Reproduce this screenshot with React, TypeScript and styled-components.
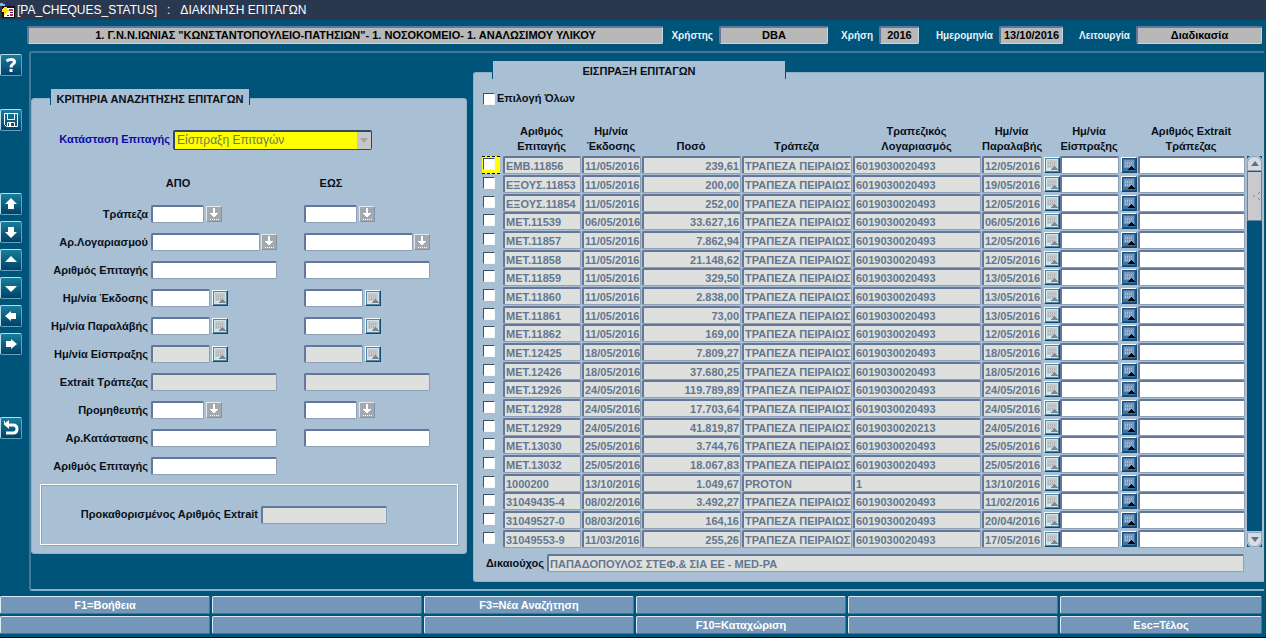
import React from "react";
import styled, { createGlobalStyle, css } from "styled-components";

const c = {
  navy: "#2a384f",
  teal: "#005379",
  panel: "#a8bfd4",
  panelEdge: "#8fb0cb",
  field: "#dee0de",
  fieldText: "#62778f",
  edge: "#62779a",
  grey: "#b8b8b8",
  button: "#7496b9",
};

const Global = createGlobalStyle`
  *, *::before, *::after { box-sizing: border-box; }
  body { margin: 0; background: #fff; font: bold 11px/15px "Liberation Sans", Arial, sans-serif; color: #0a0f18; }
  button, input, select { font: inherit; margin: 0; padding: 0; border-radius: 0; }
  svg { display: block; }
`;

const Page = styled.div`
  background: ${c.teal};
  border-bottom: 1px solid #000;
`;

const TitleBar = styled.header`
  display: flex;
  align-items: center;
  gap: 1px;
  height: 20px;
  background: ${c.navy};
  color: #fff;
  font-size: 12px;
  font-weight: normal;
  white-space: pre;
`;

const StatusBar = styled.div`
  display: grid;
  grid-template-columns: minmax(0, 1fr) 56px 109px 51px 40px 80px 64px 73px 126px;
  align-items: center;
  height: 30px;
  padding: 0 4px 0 27px;
`;

const StatusLabel = styled.span`
  padding-right: 6px;
  color: #e6f2f8;
  font-size: 10px;
  text-align: right;
`;

const StatusValue = styled.output`
  height: 18px;
  border: 2px solid #62779a;
  border-right: 1px solid #c4d6e4;
  border-bottom: 1px solid #c4d6e4;
  border-radius: 2px;
  background: ${c.grey};
  color: #000;
  line-height: 15px;
  text-align: center;
  white-space: nowrap;
  overflow: hidden;
`;

const Body = styled.div`
  display: flex;
  gap: 7px;
  padding: 1px 2px 0 0;
`;

const Tools = styled.nav`
  display: flex;
  flex: none;
  flex-direction: column;
  gap: 6px;
  width: 22px;
  padding-top: 3px;
`;

const ToolButton = styled.button<{ $before?: number }>`
  display: flex;
  align-items: center;
  justify-content: center;
  width: 22px;
  height: 22px;
  margin-top: ${(p) => p.$before ?? 0}px;
  border: 1px solid #b9dcea;
  border-right-color: #5fa3bf;
  border-bottom-color: #5fa3bf;
  border-radius: 2px;
  background: linear-gradient(#1a7d99, #00416a);
  color: #fff;
`;

const Frame = styled.main`
  display: flex;
  flex: 1;
  gap: 6px;
  align-items: flex-start;
  min-width: 0;
  padding-bottom: 7px;
  border: 2px solid #44779c;
  border-right: 0;
  border-bottom-color: #86b2cf;
  border-radius: 3px 0 0 3px;
`;

const PanelBox = styled.section<{ $grow?: boolean }>`
  display: flex;
  flex: ${(p) => (p.$grow ? "1 1 0" : "none")};
  flex-direction: column;
  align-items: flex-start;
  width: ${(p) => (p.$grow ? "auto" : "436px")};
  min-width: 0;
  padding-top: ${(p) => (p.$grow ? 8 : 36)}px;
`;

const PanelTab = styled.h2<{ $wide?: boolean }>`
  position: relative;
  width: ${(p) => (p.$wide ? 294 : 200)}px;
  height: ${(p) => (p.$wide ? 18 : 16)}px;
  margin: 0 0 -7px 19px;
  border: solid ${c.teal};
  border-width: 0 1px;
  background: ${c.panel};
  font-size: 11px;
  line-height: 20px;
  text-align: center;
`;

const PanelBody = styled.div`
  align-self: stretch;
  border: 1px solid ${c.panelEdge};
  border-radius: 3px;
  background: ${c.panel};
`;

const Criteria = styled(PanelBody)`
  padding: 30px 7px 8px 0;
`;

const StateRow = styled.div`
  display: flex;
  align-items: center;
  gap: 3px;
  height: 21px;
  padding-left: 24px;
`;

const StateLabel = styled.label`
  width: 114px;
  color: #0a0aa8;
  text-align: right;
  white-space: nowrap;
`;

const SelectWrap = styled.span`
  position: relative;
  width: 199px;
`;

const StateSelect = styled.select`
  display: block;
  appearance: none;
  width: 100%;
  height: 20px;
  padding: 0 16px 0 2px;
  border: 2px solid #34455f;
  border-right-width: 1px;
  border-bottom-width: 1px;
  border-radius: 2px;
  background: #ff0;
  color: #6c7a5c;
  font-size: 12px;
  font-weight: normal;
  line-height: 16px;
`;

const SelectArrow = styled.span`
  position: absolute;
  top: 2px;
  right: 1px;
  display: flex;
  align-items: center;
  justify-content: center;
  width: 14px;
  height: 17px;
  background: #c6c8c8;
  pointer-events: none;
`;

const RangeRow = styled.div<{ $head?: boolean }>`
  display: grid;
  grid-template-columns: 116px 150px 1fr;
  column-gap: 3px;
  align-items: center;
  height: 28px;
  margin: ${(p) => (p.$head ? "19px 0 3px" : "0")};
`;

const RangeLabel = styled.label`
  text-align: right;
  white-space: nowrap;
`;

const RangeHead = styled.span`
  width: 54px;
  text-align: center;
`;

const FieldGroup = styled.span<{ $gap: number }>`
  display: flex;
  align-items: center;
  gap: ${(p) => p.$gap}px;
`;

const fieldLook = css`
  border: 1px solid #8f9fb5;
  border-top: 2px solid ${c.edge};
  border-left: 2px solid ${c.edge};
  border-radius: 2px;
`;

const TextField = styled.input<{ $w: number }>`
  width: ${(p) => p.$w}px;
  height: 18px;
  ${fieldLook}
  background: #fff;
  &:disabled { background: ${c.field}; }
`;

const ListButton = styled.button`
  display: flex;
  align-items: center;
  justify-content: center;
  width: 16px;
  height: 16px;
  border: 1px solid #7f93ae;
  border-top-color: #e2e8ee;
  border-left-color: #e2e8ee;
  background: #a4a9b0;
`;

const DateButton = styled.button<{ $dark?: boolean }>`
  display: block;
  width: 16px;
  height: 16px;
  border: 1px solid #14496c;
  border-top-color: #f4fbfd;
  border-left-color: #f4fbfd;
  background: ${(p) => (p.$dark ? "#3f74a6" : "#cfe6ef")};
`;

const DefaultBox = styled.div`
  display: flex;
  align-items: center;
  gap: 3px;
  height: 61px;
  margin: 4px 1px 0 8px;
  padding-left: 34px;
  border: 1px solid #fff;
  box-shadow: inset 1px 1px 0 #90a5b9, 1px 1px 0 #90a5b9;
  label { width: 183px; text-align: right; white-space: nowrap; }
`;

const Results = styled(PanelBody)`
  padding: 18px 2px 9px 8px;
  border-right: 0;
  border-radius: 3px 0 0 3px;
`;

const Check = styled.input`
  appearance: none;
  display: block;
  flex: none;
  width: 12px;
  height: 12px;
  border: 1px solid #f3f7fa;
  border-top-color: #3d4f68;
  border-left-color: #3d4f68;
  background: #fff;
`;

const SelectAll = styled.label`
  display: flex;
  align-items: center;
  gap: 2px;
  height: 15px;
  padding-left: 1px;
`;

const TableArea = styled.div`
  display: flex;
  margin-top: 17px;
`;

const Table = styled.table`
  flex: 1;
  width: 0;
  min-width: 0;
  table-layout: fixed;
  border-collapse: collapse;
  th { height: 33px; padding: 0 2px 2px 0; vertical-align: bottom; white-space: nowrap; }
  td { padding: 0; vertical-align: top; }
  tbody tr { height: 19px; }
  tbody tr:nth-child(3n) { height: 18px; }
`;

const CheckCell = styled.div<{ $active?: boolean }>`
  width: 18px;
  height: 18px;
  padding: ${(p) => (p.$active ? "1px" : "2px")} 0 0 1px;
  ${(p) =>
    p.$active &&
    css`
      border: dashed #000;
      border-width: 1px 0;
      background: #ff0;
    `}
`;

const Value = styled.div<{ $right?: boolean }>`
  height: 18px;
  margin-right: 1px;
  padding: 0 1px;
  ${fieldLook}
  background: ${c.field};
  color: ${c.fieldText};
  line-height: 16px;
  text-align: ${(p) => (p.$right ? "right" : "left")};
  white-space: nowrap;
`;

const CellInput = styled.input`
  display: block;
  width: calc(100% - 1px);
  height: 18px;
  ${fieldLook}
  background: #fff;
`;

const IconCell = styled.div`
  padding: 1px 0 0 1px;
`;

const ScrollBar = styled.div`
  display: flex;
  flex: none;
  flex-direction: column;
  width: 16px;
  margin: 33px 0 1px;
  border-left: 1px solid ${c.panel};
  background: ${c.teal};
`;

const ScrollButton = styled.button<{ $down?: boolean }>`
  display: flex;
  align-items: center;
  justify-content: center;
  height: 15px;
  margin-top: ${(p) => (p.$down ? "auto" : "0")};
  border: 1px solid #8da3bb;
  border-radius: ${(p) => (p.$down ? "0 0 7px 7px" : "7px 7px 0 0")};
  background: #d9dcdf;
  box-shadow: 0 0 0 1px ${c.panel};
`;

const Thumb = styled.div`
  display: flex;
  align-items: center;
  justify-content: flex-end;
  height: 50px;
  border: 1px solid #6b809c;
  border-top-color: #34506f;
  background: #c9cacb;
`;

const Payee = styled.div`
  display: flex;
  align-items: center;
  gap: 3px;
  margin: 6px 17px 0 0;
  > span { width: 62px; text-align: right; }
  > div { flex: 1; }
`;

const Keys = styled.footer`
  display: grid;
  grid-template-columns: repeat(5, minmax(0, 210fr)) minmax(0, 202fr);
  gap: 2px;
  padding: 5px 4px 3px 0;
`;

const KeyButton = styled.button`
  height: 18px;
  border: 1px solid #dcebf5;
  border-right-color: #4b7698;
  border-bottom-color: #4b7698;
  border-radius: 2px;
  background: ${c.button};
  color: #fff;
  line-height: 16px;
`;

const AppIcon = () => (
  <svg width="16" height="18" viewBox="0 0 16 18" shapeRendering="crispEdges">
    <path d="M0 2h3v1h2v2h2v2H2V5H0z" fill="#7fb3e6" />
    <path d="M5 1h3v1h3v3H7V3H5z" fill="#1b2a8c" />
    <rect x="2" y="5" width="13" height="12" fill="#111" />
    <rect x="4" y="7" width="10" height="9" fill="#fff" />
    <path d="M4 6h3v3h2l-5 6v-4H2V9z" fill="#ffe11a" />
    <path d="M9 8h4v2H9z" fill="#b33a6a" />
    <path d="M10 11h3v1h-3zM7 14h2v1H7z" fill="#1b2a8c" />
    <path d="M10 13h3v2h-3z" fill="#c22" />
  </svg>
);

const DiskIcon = () => (
  <svg width="16" height="16" viewBox="0 0 16 16" fill="none" stroke="#fff">
    <path d="M1.5 1.5h13v13h-11l-2-2z" />
    <path d="M4.5 1.5v6h7v-6M4.5 14.5v-4h7v4" />
    <path d="M6 11h2v3H6z" fill="#fff" stroke="none" />
  </svg>
);

const shapes = {
  up: "M8 2l6 6h-3v5H5V8H2z",
  down: "M8 14l6-6h-3V3H5v5H2z",
  pageUp: "M8 4l6 6H2z",
  pageDown: "M8 12l6-6H2z",
  left: "M2 8l6-5v2h5v6H8v2z",
  right: "M14 8L8 3v2H3v6h5v2z",
};

const Shape = ({ d }: { d: string }) => (
  <svg width="16" height="16" viewBox="0 0 16 16">
    <path d={d} fill="#fff" />
  </svg>
);

const HelpIcon = () => (
  <svg width="16" height="16" viewBox="0 0 16 16" fill="none" stroke="#fff" strokeWidth="3">
    <path d="M3.500 4Q5.500 2.500 8 2.500q3.500 0 3.500 2.500Q11.500 6.500 9.500 7.500 8 8.500 8 10.500" />
    <path d="M8 12v3" />
  </svg>
);

const ReturnIcon = () => (
  <svg width="18" height="18" viewBox="0 0 18 18" fill="none" stroke="#fff">
    <path d="M4 6h7q4 0 4 4t-4 4H4" strokeWidth="3" />
    <path d="M7 1v9L2 5.500V2h1v2z" fill="#fff" stroke="none" />
  </svg>
);

const ListIcon = () => (
  <svg width="14" height="14" viewBox="0 0 14 14" shapeRendering="crispEdges">
    <path d="M6 1h2v5h3v1h-1v1H9v1H8v1H6V9H5V8H4V7H3V6h3z" fill="#fff" />
    <path d="M3 12.500h9" stroke="#fff" strokeDasharray="1 1" />
  </svg>
);

const CalendarIcon = ({ dark }: { dark?: boolean }) => (
  <svg width="14" height="14" viewBox="0 0 14 14" shapeRendering="crispEdges">
    <path d="M.5 14V.5H14M13.500 0v13.500H0" fill="none" stroke={dark ? "#1d4f7a" : "#4f87a3"} />
    <path d="M2 2h10v8H2z" fill={dark ? "#7798bb" : "#c6c8c9"} />
    <path
      d="M3 4.500h8M3 7.500h8"
      stroke={dark ? "#a9bfd6" : "#b0b4b7"}
      strokeWidth="2"
      strokeDasharray="1 1"
    />
    <path d="M9 8h1v1h1v1h1v1h1v1H6v-1h1v-1h1V9h1z" fill={dark ? "#000" : "#7f8588"} />
  </svg>
);

const Triangle = ({ down, color }: { down?: boolean; color: string }) => (
  <svg width="8" height="5" viewBox="0 0 8 5">
    <path d={down ? "M0 0h8L4 5z" : "M0 5h8L4 0z"} fill={color} />
  </svg>
);

type Kind = "short" | "account" | "full" | "date";
const kinds: Record<Kind, { w: number; gap: number }> = {
  short: { w: 53, gap: 2 },
  account: { w: 109, gap: 1 },
  full: { w: 126, gap: 0 },
  date: { w: 59, gap: 2 },
};

const criteria: { label: string; kind: Kind; off?: boolean; single?: boolean }[] = [
  { label: "Τράπεζα", kind: "short" },
  { label: "Αρ.Λογαριασμού", kind: "account" },
  { label: "Αριθμός Επιταγής", kind: "full" },
  { label: "Ημ/νία Έκδοσης", kind: "date" },
  { label: "Ημ/νία Παραλάβής", kind: "date" },
  { label: "Ημ/νία Είσπραξης", kind: "date", off: true },
  { label: "Extrait Τράπεζας", kind: "full", off: true },
  { label: "Προμηθευτής", kind: "short" },
  { label: "Αρ.Κατάστασης", kind: "full" },
  { label: "Αριθμός Επιταγής", kind: "full", single: true },
];

const RangeField = ({ id, name, kind, off }: { id: string; name: string; kind: Kind; off?: boolean }) => (
  <FieldGroup $gap={kinds[kind].gap}>
    <TextField id={id} aria-label={name} $w={kinds[kind].w} disabled={off} />
    {(kind === "short" || kind === "account") && (
      <ListButton type="button" aria-label={name}>
        <ListIcon />
      </ListButton>
    )}
    {kind === "date" && (
      <DateButton type="button" aria-label={name}>
        <CalendarIcon />
      </DateButton>
    )}
  </FieldGroup>
);

const bank = "ΤΡΑΠΕΖΑ ΠΕΙΡΑΙΩΣ";
const account = "6019030020493";
const cheques: string[][] = [
  ["ΕΜΒ.11856", "11/05/2016", "239,61", bank, account, "12/05/2016"],
  ["ΕΞΟΥΣ.11853", "11/05/2016", "200,00", bank, account, "19/05/2016"],
  ["ΕΞΟΥΣ.11854", "11/05/2016", "252,00", bank, account, "12/05/2016"],
  ["ΜΕΤ.11539", "06/05/2016", "33.627,16", bank, account, "06/05/2016"],
  ["ΜΕΤ.11857", "11/05/2016", "7.862,94", bank, account, "12/05/2016"],
  ["ΜΕΤ.11858", "11/05/2016", "21.148,62", bank, account, "12/05/2016"],
  ["ΜΕΤ.11859", "11/05/2016", "329,50", bank, account, "13/05/2016"],
  ["ΜΕΤ.11860", "11/05/2016", "2.838,00", bank, account, "13/05/2016"],
  ["ΜΕΤ.11861", "11/05/2016", "73,00", bank, account, "13/05/2016"],
  ["ΜΕΤ.11862", "11/05/2016", "169,00", bank, account, "12/05/2016"],
  ["ΜΕΤ.12425", "18/05/2016", "7.809,27", bank, account, "18/05/2016"],
  ["ΜΕΤ.12426", "18/05/2016", "37.680,25", bank, account, "18/05/2016"],
  ["ΜΕΤ.12926", "24/05/2016", "119.789,89", bank, account, "24/05/2016"],
  ["ΜΕΤ.12928", "24/05/2016", "17.703,64", bank, account, "24/05/2016"],
  ["ΜΕΤ.12929", "24/05/2016", "41.819,87", bank, "6019030020213", "24/05/2016"],
  ["ΜΕΤ.13030", "25/05/2016", "3.744,76", bank, account, "25/05/2016"],
  ["ΜΕΤ.13032", "25/05/2016", "18.067,83", bank, account, "25/05/2016"],
  ["1000200", "13/10/2016", "1.049,67", "PROTON", "1", "13/10/2016"],
  ["31049435-4", "08/02/2016", "3.492,27", bank, account, "11/02/2016"],
  ["31049527-0", "08/03/2016", "164,16", bank, account, "20/04/2016"],
  ["31049553-9", "11/03/2016", "255,26", bank, account, "17/05/2016"],
];

const widths = [21, 79, 60, 100, 111, 129, 61, 17, 60, 18];

const keys = [
  "F1=Βοήθεια", "", "F3=Νέα Αναζήτηση", "", "", "",
  "", "", "", "F10=Καταχώριση", "", "Esc=Τέλος",
];

export default function App() {
  return (
    <Page>
      <Global />
      <TitleBar>
        <AppIcon />
        <span>{"[PA_CHEQUES_STATUS]   :   ΔΙΑΚΙΝΗΣΗ ΕΠΙΤΑΓΩΝ"}</span>
      </TitleBar>
      <StatusBar>
        <StatusValue>1. Γ.Ν.Ν.ΙΩΝΙΑΣ "ΚΩΝΣΤΑΝΤΟΠΟΥΛΕΙΟ-ΠΑΤΗΣΙΩΝ"- 1. ΝΟΣΟΚΟΜΕΙΟ- 1. ΑΝΑΛΩΣΙΜΟΥ ΥΛΙΚΟΥ</StatusValue>
        <StatusLabel>Χρήστης</StatusLabel>
        <StatusValue>DBA</StatusValue>
        <StatusLabel>Χρήση</StatusLabel>
        <StatusValue>2016</StatusValue>
        <StatusLabel>Ημερομηνία</StatusLabel>
        <StatusValue>13/10/2016</StatusValue>
        <StatusLabel>Λειτουργία</StatusLabel>
        <StatusValue>Διαδικασία</StatusValue>
      </StatusBar>
      <Body>
        <Tools>
          <ToolButton type="button" aria-label="Βοήθεια"><HelpIcon /></ToolButton>
          <ToolButton type="button" aria-label="Καταχώριση" $before={27}><DiskIcon /></ToolButton>
          <ToolButton type="button" aria-label="Πάνω" $before={56}><Shape d={shapes.up} /></ToolButton>
          <ToolButton type="button" aria-label="Κάτω"><Shape d={shapes.down} /></ToolButton>
          <ToolButton type="button" aria-label="Προηγούμενη σελίδα"><Shape d={shapes.pageUp} /></ToolButton>
          <ToolButton type="button" aria-label="Επόμενη σελίδα"><Shape d={shapes.pageDown} /></ToolButton>
          <ToolButton type="button" aria-label="Αριστερά"><Shape d={shapes.left} /></ToolButton>
          <ToolButton type="button" aria-label="Δεξιά"><Shape d={shapes.right} /></ToolButton>
          <ToolButton type="button" aria-label="Τέλος" $before={56}><ReturnIcon /></ToolButton>
        </Tools>
        <Frame>
          <PanelBox>
            <PanelTab>ΚΡΙΤΗΡΙΑ ΑΝΑΖΗΤΗΣΗΣ ΕΠΙΤΑΓΩΝ</PanelTab>
            <Criteria>
              <StateRow>
                <StateLabel htmlFor="state">Κατάσταση Επιταγής</StateLabel>
                <SelectWrap>
                  <StateSelect id="state">
                    <option>Είσπραξη Επιταγών</option>
                  </StateSelect>
                  <SelectArrow>
                    <Triangle down color="#a4a6a8" />
                  </SelectArrow>
                </SelectWrap>
              </StateRow>
              <RangeRow $head>
                <span />
                <RangeHead>ΑΠΟ</RangeHead>
                <RangeHead>ΕΩΣ</RangeHead>
              </RangeRow>
              {criteria.map((f, i) => (
                <RangeRow key={i}>
                  <RangeLabel htmlFor={`from${i}`}>{f.label}</RangeLabel>
                  <RangeField id={`from${i}`} name={`${f.label} από`} kind={f.kind} off={f.off} />
                  {!f.single && <RangeField id={`to${i}`} name={`${f.label} έως`} kind={f.kind} off={f.off} />}
                </RangeRow>
              ))}
              <DefaultBox>
                <label htmlFor="extrait">Προκαθορισμένος Αριθμός Extrait</label>
                <TextField id="extrait" $w={126} disabled />
              </DefaultBox>
            </Criteria>
          </PanelBox>
          <PanelBox $grow>
            <PanelTab $wide>ΕΙΣΠΡΑΞΗ ΕΠΙΤΑΓΩΝ</PanelTab>
            <Results>
              <SelectAll>
                <Check type="checkbox" />
                Επιλογή Όλων
              </SelectAll>
              <TableArea>
                <Table>
                  <colgroup>
                    {widths.map((w, i) => (
                      <col key={i} width={w} />
                    ))}
                    <col />
                  </colgroup>
                  <thead>
                    <tr>
                      <th />
                      <th>Αριθμός<br />Επιταγής</th>
                      <th>Ημ/νία<br />Έκδοσης</th>
                      <th>Ποσό</th>
                      <th>Τράπεζα</th>
                      <th>Τραπεζικός<br />Λογαριασμός</th>
                      <th>Ημ/νία<br />Παραλαβής</th>
                      <th />
                      <th>Ημ/νία<br />Είσπραξης</th>
                      <th />
                      <th>Αριθμός Extrait<br />Τράπεζας</th>
                    </tr>
                  </thead>
                  <tbody>
                    {cheques.map((row, r) => (
                      <tr key={r}>
                        <td>
                          <CheckCell $active={r === 0}>
                            <Check type="checkbox" aria-label={row[0]} />
                          </CheckCell>
                        </td>
                        {row.map((v, i) => (
                          <td key={i}>
                            <Value $right={i === 2}>{v}</Value>
                          </td>
                        ))}
                        <td>
                          <IconCell>
                            <DateButton type="button" aria-label="Ημ/νία Παραλαβής">
                              <CalendarIcon />
                            </DateButton>
                          </IconCell>
                        </td>
                        <td>
                          <CellInput aria-label="Ημ/νία Είσπραξης" />
                        </td>
                        <td>
                          <IconCell>
                            <DateButton type="button" $dark aria-label="Ημ/νία Είσπραξης">
                              <CalendarIcon dark />
                            </DateButton>
                          </IconCell>
                        </td>
                        <td>
                          <CellInput aria-label="Αριθμός Extrait Τράπεζας" />
                        </td>
                      </tr>
                    ))}
                  </tbody>
                </Table>
                <ScrollBar>
                  <ScrollButton type="button" aria-label="Πάνω">
                    <Triangle color="#5c7092" />
                  </ScrollButton>
                  <Thumb>
                    <svg width="9" height="12" viewBox="0 0 9 12" stroke="#7d8186">
                      <path d="M1 7l2-2M6 4l2-2M6 8l2 2" />
                    </svg>
                  </Thumb>
                  <ScrollButton type="button" $down aria-label="Κάτω">
                    <Triangle down color="#5c7092" />
                  </ScrollButton>
                </ScrollBar>
              </TableArea>
              <Payee>
                <span>Δικαιούχος</span>
                <Value>ΠΑΠΑΔΟΠΟΥΛΟΣ ΣΤΕΦ.&amp; ΣΙΑ ΕΕ - MED-PA</Value>
              </Payee>
            </Results>
          </PanelBox>
        </Frame>
      </Body>
      <Keys>
        {keys.map((k, i) => (
          <KeyButton key={i} type="button">
            {k}
          </KeyButton>
        ))}
      </Keys>
    </Page>
  );
}
